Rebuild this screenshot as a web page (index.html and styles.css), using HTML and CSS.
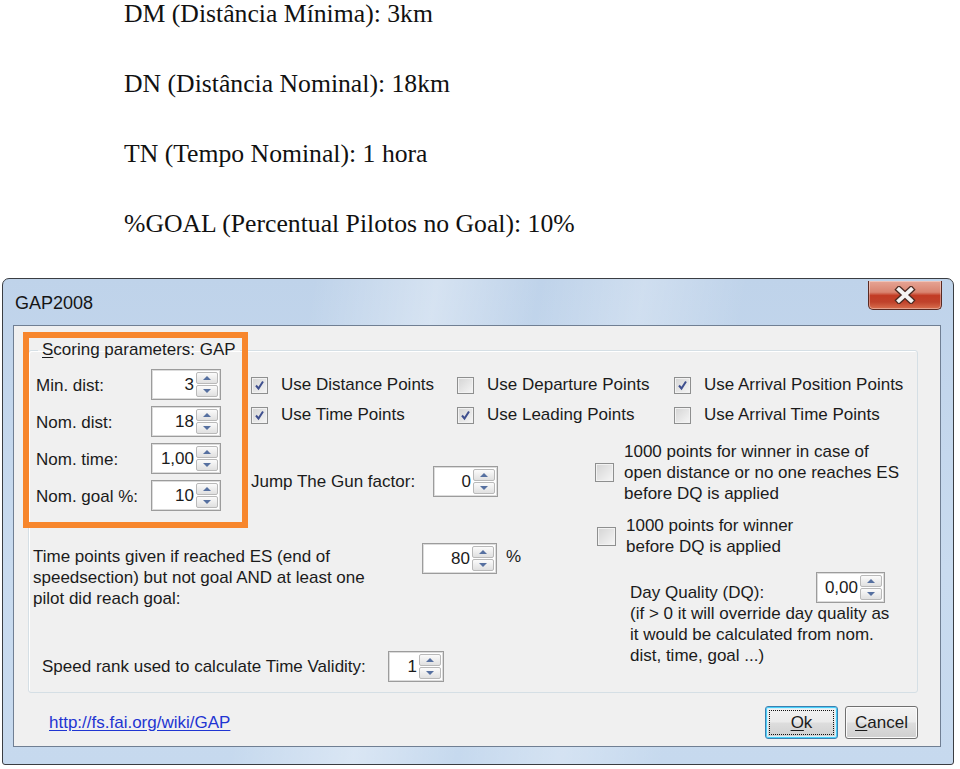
FILE: index.html
```html
<!DOCTYPE html>
<html lang="pt">
<head>
<meta charset="utf-8">
<title>GAP2008</title>
<link rel="stylesheet" href="styles.css">
</head>
<body>
<div class="doc">
  <p>DM (Distância Mínima): 3km</p>
  <p>DN (Distância Nominal): 18km</p>
  <p>TN (Tempo Nominal): 1 hora</p>
  <p>%GOAL (Percentual Pilotos no Goal): 10%</p>
</div>

<div class="window">
  <div class="titlebar">
    <span class="title">GAP2008</span>
    <div class="close">
      <svg width="24" height="18" viewBox="0 0 24 18">
        <path d="M6 3.5 L18 14.5 M18 3.5 L6 14.5" stroke="#4a2a22" stroke-width="6.5" stroke-linecap="square"/>
        <path d="M6 3.5 L18 14.5 M18 3.5 L6 14.5" stroke="#f4f4f4" stroke-width="4" stroke-linecap="square"/>
      </svg>
    </div>
  </div>

  <div class="client">
    <fieldset class="group">
      <legend><u>S</u>coring parameters: GAP</legend>

      <div class="top">
        <div class="params">
          <span class="lbl">Min. dist:</span>
          <div class="spin w70"><span class="v">3</span><span class="arr"><i class="up"></i><i class="dn"></i></span></div>
          <span class="lbl">Nom. dist:</span>
          <div class="spin w70"><span class="v">18</span><span class="arr"><i class="up"></i><i class="dn"></i></span></div>
          <span class="lbl">Nom. time:</span>
          <div class="spin w70"><span class="v">1,00</span><span class="arr"><i class="up"></i><i class="dn"></i></span></div>
          <span class="lbl">Nom. goal %:</span>
          <div class="spin w70"><span class="v">10</span><span class="arr"><i class="up"></i><i class="dn"></i></span></div>
        </div>

        <div class="middle">
          <div class="cbgrid">
            <div class="opt"><span class="cb"><svg width="11" height="11" viewBox="0 0 11 11"><path d="M2 5.5 L4.5 8.5 L9 1.5" fill="none" stroke="#3e4f8e" stroke-width="2"/></svg></span><span>Use Distance Points</span></div>
            <div class="opt"><span class="cb"></span><span>Use Departure Points</span></div>
            <div class="opt"><span class="cb"><svg width="11" height="11" viewBox="0 0 11 11"><path d="M2 5.5 L4.5 8.5 L9 1.5" fill="none" stroke="#3e4f8e" stroke-width="2"/></svg></span><span>Use Arrival Position Points</span></div>
            <div class="opt"><span class="cb"><svg width="11" height="11" viewBox="0 0 11 11"><path d="M2 5.5 L4.5 8.5 L9 1.5" fill="none" stroke="#3e4f8e" stroke-width="2"/></svg></span><span>Use Time Points</span></div>
            <div class="opt"><span class="cb"><svg width="11" height="11" viewBox="0 0 11 11"><path d="M2 5.5 L4.5 8.5 L9 1.5" fill="none" stroke="#3e4f8e" stroke-width="2"/></svg></span><span>Use Leading Points</span></div>
            <div class="opt"><span class="cb"></span><span>Use Arrival Time Points</span></div>
          </div>

          <div class="lower">
            <div class="jump">
              <span class="jlbl">Jump The Gun factor:</span>
              <div class="spin w65"><span class="v">0</span><span class="arr"><i class="up"></i><i class="dn"></i></span></div>
            </div>
            <div class="cbblock first">
              <span class="cb big"></span>
              <span class="multi">1000 points for winner in case of<br>open distance or no one reaches ES<br>before DQ is applied</span>
            </div>
          </div>
        </div>
      </div>

      <div class="bottom">
        <div class="leftcol">
          <div class="timerow">
            <span class="multi timetext">Time points given if reached ES (end of<br>speedsection) but not goal AND at least one<br>pilot did reach goal:</span>
            <div class="spin w75"><span class="v">80</span><span class="arr"><i class="up"></i><i class="dn"></i></span></div>
            <span class="pct">%</span>
          </div>
          <div class="speedrow">
            <span class="slbl">Speed rank used to calculate Time Validity:</span>
            <div class="spin w56"><span class="v">1</span><span class="arr"><i class="up"></i><i class="dn"></i></span></div>
          </div>
        </div>

        <div class="rightcol">
          <div class="cbblock second">
            <span class="cb big"></span>
            <span class="multi">1000 points for winner<br>before DQ is applied</span>
          </div>
          <div class="dq">
            <div class="dqhead">
              <span class="dqlbl">Day Quality (DQ):</span>
              <div class="spin w69"><span class="v">0,00</span><span class="arr"><i class="up"></i><i class="dn"></i></span></div>
            </div>
            <span class="multi dqtext">(if &gt; 0 it will override day quality as<br>it would be calculated from nom.<br>dist, time, goal ...)</span>
          </div>
        </div>
      </div>
    </fieldset>

    <div class="footer">
      <a class="link" href="#">http://fs.fai.org/wiki/GAP</a>
      <div class="buttons">
        <span class="btn default"><u>O</u>k</span>
        <span class="btn"><u>C</u>ancel</span>
      </div>
    </div>
  </div>

  <div class="highlight"></div>
</div>
</body>
</html>
```

FILE: styles.css
```css
html, body {
  margin: 0;
  padding: 0;
  background: #ffffff;
}

.doc {
  padding-left: 124px;
  font-family: "Liberation Serif", "Times New Roman", serif;
  font-size: 25.7px;
  color: #111;
}

.doc p {
  margin: 0 0 42px;
  line-height: 28px;
  white-space: nowrap;
}

.doc p:last-child {
  margin-bottom: 0;
}

.window {
  position: relative;
  margin: 40px 0 0 2px;
  width: 952px;
  box-sizing: border-box;
  border: 1px solid #3a3d42;
  border-radius: 7px 7px 3px 3px;
  padding: 0 12px 17px 10px;
  background:
    linear-gradient(100deg, rgba(255,255,255,0) 30%, rgba(255,255,255,0.35) 42%, rgba(255,255,255,0) 52%, rgba(255,255,255,0.25) 62%, rgba(255,255,255,0) 72%),
    linear-gradient(#bfd3ea, #c9dbef 60%, #c6d9ee);
  font-family: "Liberation Sans", Arial, sans-serif;
  font-size: 17px;
  color: #1b1b1b;
}

.titlebar {
  height: 46px;
  display: flex;
  justify-content: space-between;
  align-items: flex-start;
}

.title {
  align-self: center;
  padding-left: 2px;
  font-size: 18px;
  color: #151515;
  margin-top: 2px;
}

.close {
  margin-top: 2px;
  margin-right: -1px;
  width: 74px;
  height: 29px;
  box-sizing: border-box;
  border: 1px solid #5a2a22;
  border-top: none;
  border-radius: 0 0 5px 5px;
  background: linear-gradient(#e6a595, #d98470 40%, #c23b24 52%, #c0422b 75%, #d9704f);
  display: flex;
  align-items: center;
  justify-content: center;
  box-shadow: inset 0 0 0 1px rgba(255,255,255,0.35);
}

.client {
  border: 1px solid #707f93;
  background: #f0f0f0;
  padding: 14px 22px 7px 14px;
}

.group {
  margin: 0;
  padding: 9px 10px 10px 7px;
  border: 1px solid #d5dfe5;
  border-radius: 3px;
  box-shadow: inset 1px 1px 0 #ffffff;
}

.group legend {
  padding: 0 4px;
  margin-left: 2px;
  line-height: 20px;
  font-size: 17px;
}

u {
  text-decoration: underline;
  text-underline-offset: 2px;
}

/* Spin boxes */
.spin {
  display: flex;
  height: 31px;
  box-sizing: border-box;
  border: 1px solid #9c9c9c;
  box-shadow: inset 0 0 0 1px #dcdcdc;
  background: #ffffff;
  padding: 2px;
  flex: none;
}

.spin .v {
  flex: 1;
  text-align: right;
  line-height: 25px;
  padding-right: 2px;
}

.spin .arr {
  width: 22px;
  display: flex;
  flex-direction: column;
  gap: 1px;
}

.spin .arr i {
  flex: 1;
  border: 1px solid #b9b9b9;
  border-radius: 2px;
  background: linear-gradient(#fbfbfb, #e0e0e0);
  display: flex;
  align-items: center;
  justify-content: center;
}

.spin .arr i::after {
  content: "";
  border-left: 4px solid transparent;
  border-right: 4px solid transparent;
}

.spin .arr i.up::after {
  border-bottom: 4px solid #5670a0;
}

.spin .arr i.dn::after {
  border-top: 4px solid #5670a0;
}

.w70 { width: 70px; }
.w65 { width: 65px; }
.w75 { width: 75px; }
.w56 { width: 56px; }
.w69 { width: 69px; }

/* Top section */
.top {
  display: flex;
}

.params {
  display: grid;
  grid-template-columns: 115px 70px;
  row-gap: 6px;
  grid-auto-rows: 31px;
  align-items: center;
}

.params .lbl {
  padding-top: 3px;
}

.middle {
  margin-left: 30px;
  display: flex;
  flex-direction: column;
}

.cbgrid {
  margin-top: 1px;
  display: grid;
  grid-template-columns: 206px 217px auto;
  grid-auto-rows: 30px;
  align-items: center;
}

.opt {
  display: flex;
  align-items: center;
  gap: 13px;
}

.cb {
  width: 17px;
  height: 17px;
  flex: none;
  box-sizing: border-box;
  border: 1px solid #8e8f8f;
  background: linear-gradient(135deg, #d4d4d4, #f6f6f6);
  box-shadow: inset 0 0 0 1px #f2f2f2;
  display: flex;
  align-items: center;
  justify-content: center;
}

.cb.big {
  width: 19px;
  height: 19px;
}

.lower {
  margin-top: 11px;
  display: flex;
  align-items: flex-start;
}

.jump {
  margin-top: 25px;
  display: flex;
  align-items: center;
}

.jlbl {
  width: 182px;
}

.cbblock {
  display: flex;
  align-items: center;
  gap: 10px;
  white-space: nowrap;
}

.cbblock.first {
  margin-left: 97px;
}

.multi {
  line-height: 21px;
  white-space: nowrap;
}

/* Bottom section */
.bottom {
  display: flex;
  align-items: flex-start;
}

.leftcol {
  flex: 0 0 561px;
}

.timerow {
  margin-left: -3px;
  margin-top: 32px;
  display: flex;
  align-items: flex-start;
}

.timetext {
  width: 389px;
  margin-top: 3px;
}

.pct {
  margin-left: 9px;
  margin-top: 4px;
}

.speedrow {
  margin-top: 42px;
  margin-left: 6px;
  display: flex;
  align-items: center;
}

.slbl {
  width: 346px;
}

.rightcol {
  margin-top: 4px;
  display: flex;
  flex-direction: column;
}

.dq {
  margin-left: 33px;
  margin-top: 15px;
  width: 255px;
}

.dqhead {
  display: flex;
  justify-content: space-between;
  align-items: flex-end;
}

.dqlbl {
  line-height: 21px;
}

.dqtext {
  display: block;
}

/* Footer */
.footer {
  margin-top: 13px;
  padding-left: 21px;
  display: flex;
  justify-content: space-between;
  align-items: center;
}

.link {
  color: #1f35d2;
  text-decoration: underline;
  text-underline-offset: 2px;
}

.buttons {
  display: flex;
  gap: 7px;
}

.btn {
  width: 73px;
  height: 33px;
  box-sizing: border-box;
  border: 1px solid #707070;
  border-radius: 3px;
  background: linear-gradient(#f2f2f2, #ebebeb 48%, #dddddd 52%, #cfcfcf);
  box-shadow: inset 0 0 0 1px #fbfbfb;
  display: flex;
  align-items: center;
  justify-content: center;
}

.btn.default {
  border-color: #3c7fb1;
  box-shadow: inset 0 0 0 1px #48d0f8, inset 0 0 0 2px #d8f0fa;
  outline: 1px dotted #111;
  outline-offset: -5px;
}

/* Annotation */
.highlight {
  position: absolute;
  left: 20px;
  top: 53px;
  width: 225px;
  height: 196px;
  box-sizing: border-box;
  border: 6px solid #f7862c;
}
```
